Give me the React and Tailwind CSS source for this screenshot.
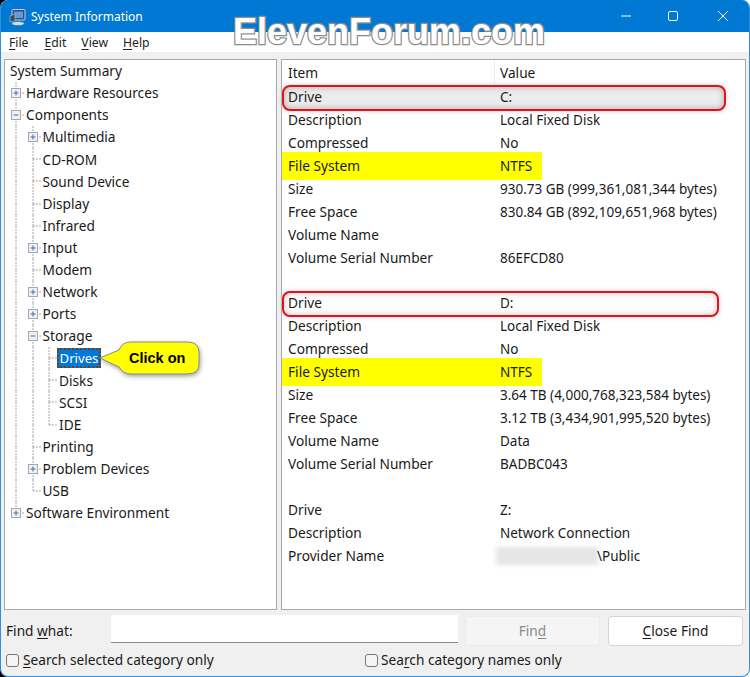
const FONT = "font-['Noto_Sans','Open_Sans',sans-serif]";

function Cell({ kind }) {
  const g = "#a8a8a8";
  const vTop = kind && kind !== "N";
  const vBottom = ["I", "T", "T+", "T-"].includes(kind);
  const horiz = kind && kind !== "I" && kind !== "N";
  const box = kind && (kind.endsWith("+") || kind.endsWith("-"));
  return (
    <svg width="16.5" height="22.1" viewBox="0 0 16.5 22.1" className="shrink-0">
      {vTop && <line x1="8" y1="0" x2="8" y2="11" stroke={g} strokeWidth="1" strokeDasharray="2 1" />}
      {vBottom && <line x1="8" y1="11" x2="8" y2="22.1" stroke={g} strokeWidth="1" strokeDasharray="2 1" />}
      {horiz && <line x1="8" y1="11" x2="16.5" y2="11" stroke={g} strokeWidth="1" strokeDasharray="2 1" />}
      {box && (
        <g>
          <rect x="3.5" y="6.5" width="9" height="9" fill="#eef1f6" stroke="#a0a8b4" />
          <line x1="5.5" y1="11" x2="10.5" y2="11" stroke="#4a6a9a" strokeWidth="1" />
          {kind.endsWith("+") && <line x1="8" y1="8.5" x2="8" y2="13.5" stroke="#4a6a9a" strokeWidth="1" />}
        </g>
      )}
    </svg>
  );
}

const tree = [
  [[], "System Summary", "root"],
  [["T+"], "Hardware Resources"],
  [["T-"], "Components"],
  [["I", "T+"], "Multimedia"],
  [["I", "T"], "CD-ROM"],
  [["I", "T"], "Sound Device"],
  [["I", "T"], "Display"],
  [["I", "T"], "Infrared"],
  [["I", "T+"], "Input"],
  [["I", "T"], "Modem"],
  [["I", "T+"], "Network"],
  [["I", "T+"], "Ports"],
  [["I", "T-"], "Storage"],
  [["I", "I", "T"], "Drives", "sel"],
  [["I", "I", "T"], "Disks"],
  [["I", "I", "T"], "SCSI"],
  [["I", "I", "L"], "IDE"],
  [["I", "T"], "Printing"],
  [["I", "T+"], "Problem Devices"],
  [["I", "L"], "USB"],
  [["L+"], "Software Environment"],
];

const rows = [
  ["Drive", "C:", "c"],
  ["Description", "Local Fixed Disk"],
  ["Compressed", "No"],
  ["File System", "NTFS", "y"],
  ["Size", "930.73 GB (999,361,081,344 bytes)"],
  ["Free Space", "830.84 GB (892,109,651,968 bytes)"],
  ["Volume Name", ""],
  ["Volume Serial Number", "86EFCD80"],
  ["", "", "short"],
  ["Drive", "D:", "d"],
  ["Description", "Local Fixed Disk"],
  ["Compressed", "No"],
  ["File System", "NTFS", "y"],
  ["Size", "3.64 TB (4,000,768,323,584 bytes)"],
  ["Free Space", "3.12 TB (3,434,901,995,520 bytes)"],
  ["Volume Name", "Data"],
  ["Volume Serial Number", "BADBC043"],
  ["", ""],
  ["Drive", "Z:"],
  ["Description", "Network Connection"],
  ["Provider Name", "\\Public", "p"],
];

function DataRow({ item, value, tag }) {
  return (
    <div className={`relative flex items-center whitespace-nowrap ${tag === "short" ? "h-[22px]" : "h-[23px]"}`}>
      {tag === "y" && <div className="absolute left-0 top-[-3px] h-[28px] w-[260px] bg-[#ffff00]" />}
      {tag === "c" && (
        <div className="absolute left-0 top-[-1px] h-[26px] w-[444px] rounded-lg border-2 border-[#e8101a] bg-[#ececec] shadow-[inset_0_0_6px_#a8a8a8,0_0_5px_#cfcfcf]" />
      )}
      {tag === "d" && (
        <div className="absolute left-0 top-[-1px] h-[26px] w-[437px] rounded-lg border-2 border-[#e8101a] bg-white shadow-[inset_0_0_6px_#c4c4c4,0_0_5px_#cfcfcf]" />
      )}
      <span className="relative mt-[-1px] w-[206px] shrink-0 box-content pl-[6px]">{item}</span>
      {tag === "p" && <div className="absolute left-[214px] top-[2px] h-[18px] w-[102px] bg-[#e6e6e6] blur-[2px]" />}
      <span className={tag === "p" ? "relative ml-[103px] text-[13.5px]" : "relative ml-[6px] text-[13.5px]"}>{value}</span>
    </div>
  );
}

function U({ children }) {
  return <span className="underline underline-offset-2">{children}</span>;
}

export default function App() {
  return (
    <div className={`h-[677px] w-[750px] overflow-hidden bg-[linear-gradient(90deg,#000_0_50%,#fff_50%)] text-[13.7px] leading-none text-[#1a1a1a] ${FONT}`}>
      <div className="relative flex h-full flex-col overflow-hidden rounded-lg border border-t-0 border-[#2f8fe0] bg-[#f0f0f0]">
        <div className="flex h-[32px] shrink-0 items-center bg-[#0078d4] text-white">
          <svg width="18" height="18" viewBox="0 0 18 18" className="ml-[8px] mt-[1px] shrink-0">
            <rect x="3" y="1.5" width="13" height="10.5" rx="1" fill="#27508f" stroke="#c4cfdc" />
            <rect x="5" y="3.5" width="9" height="6.5" fill="#6a9ad6" />
            <path d="M1 8 L6 6 V13 L1 14 Z" fill="#3b4c66" stroke="#b9c4d2" strokeWidth="0.6" />
            <ellipse cx="9" cy="15.5" rx="6" ry="1.8" fill="#d6dbe0" />
          </svg>
          <span className="ml-[4px] mt-[2px] text-[12px]">System Information</span>
          <div className="ml-auto flex items-center">
            <svg width="12" height="12" viewBox="0 0 12 12" className="mr-[35px]"><line x1="1" y1="6" x2="11" y2="6" stroke="#fff" /></svg>
            <svg width="12" height="12" viewBox="0 0 12 12" className="mr-[38px]"><rect x="1.5" y="1.5" width="9" height="9" rx="1.5" fill="none" stroke="#fff" /></svg>
            <svg width="12" height="12" viewBox="0 0 12 12" className="mr-[20px]"><path d="M1 1 L11 11 M11 1 L1 11" stroke="#fff" /></svg>
          </div>
        </div>
        <div className="flex h-[20px] shrink-0 items-center bg-white pt-[2px] text-[12.2px] text-[#222]">
          <span className="ml-[8px]"><U>F</U>ile</span>
          <span className="ml-[16px]"><U>E</U>dit</span>
          <span className="ml-[15px]"><U>V</U>iew</span>
          <span className="ml-[15px]"><U>H</U>elp</span>
        </div>

        <div className="mt-[7px] flex h-[551px] shrink-0 gap-[4px] px-[3px]">
          <div className="relative h-full w-[273px] shrink-0 border border-[#a8a8a8] bg-white pl-[3px]">
            {tree.map(([cells, label, tag], i) => (
              <div key={i} className="flex h-[22.1px] items-center whitespace-nowrap">
                {cells.map((c, j) => <Cell key={j} kind={c} />)}
                {tag === "sel" ? (
                  <span className="ml-[-0.5px] flex h-[20px] items-center border-2 border-dotted border-[#7a3b10] bg-[#0078d7] pl-[0.5px] pr-[0.5px] text-[13.2px] text-white">{label}</span>
                ) : (
                  <span className={tag === "root" ? "ml-[2px]" : "ml-[1.5px]"}>{label}</span>
                )}
              </div>
            ))}
            <svg width="102" height="36" viewBox="0 0 102 36" className="absolute left-[94px] top-[281px] drop-shadow-[1px_2px_2px_rgba(0,0,0,0.35)]">
              <path d="M1 17 L20 9 Q23 1 32 1 L88 1 Q100 1 100 11 L100 23 Q100 33 88 33 L32 33 Q24 33 20 26 Z" fill="#ffff00" stroke="#8a8a8a" />
            </svg>
            <span className="absolute left-[124px] top-[291px] font-['Liberation_Sans',sans-serif] text-[14.5px] font-bold text-black">Click on</span>
          </div>

          <div className="h-full w-[465px] shrink-0 border border-[#a8a8a8] bg-white">
            <div className="flex h-[26px] items-center">
              <span className="w-[206px] shrink-0 box-content pl-[6px]">Item</span>
              <span className="h-full w-px bg-[#ececec]" />
              <span className="ml-[5px]">Value</span>
            </div>
            {rows.map(([item, value, tag], i) => <DataRow key={i} item={item} value={value} tag={tag} />)}
          </div>
        </div>

        <div className="mt-[5px] flex h-[31px] shrink-0 items-start pl-[5px]">
          <span className="mt-[9px] w-[105px] shrink-0">Find <U>w</U>hat:</span>
          <div className="h-[28px] w-[347px] shrink-0 border-b border-[#8a8a8a] bg-white" />
          <button className="ml-[7px] mt-[1px] h-[30px] w-[135px] shrink-0 rounded-[4px] border border-[#ececec] bg-[#f5f5f5] text-[#8a8a8a]">Fin<U>d</U></button>
          <button className="ml-[8px] mt-[1px] h-[30px] w-[135px] shrink-0 rounded-[4px] border border-[#d4d4d4] bg-white text-[#1a1a1a]"><U>C</U>lose Find</button>
        </div>

        <div className="mt-[5px] flex h-[18px] shrink-0 items-center pl-[5px]">
          <span className="h-[13px] w-[13px] shrink-0 rounded-[3px] border border-[#777] bg-[#f5f5f5]" />
          <span className="ml-[4px] w-[342px] shrink-0"><U>S</U>earch selected category only</span>
          <span className="h-[13px] w-[13px] shrink-0 rounded-[3px] border border-[#777] bg-[#f5f5f5]" />
          <span className="ml-[3px]">Sea<U>r</U>ch category names only</span>
        </div>

        <span className="absolute left-[232px] top-[11px] whitespace-nowrap font-['Liberation_Sans',sans-serif] text-[36px] font-bold leading-[42px] text-white [-webkit-text-stroke:2.5px_#8c8c8c] [paint-order:stroke_fill]">ElevenForum.com</span>
      </div>
    </div>
  );
}
